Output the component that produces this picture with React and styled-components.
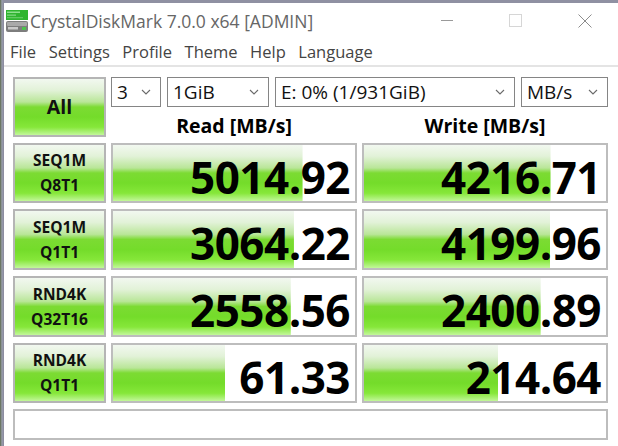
import React from 'react';
import styled, { createGlobalStyle } from 'styled-components';

const GlobalStyle = createGlobalStyle`
  html, body {
    margin: 0;
    padding: 0;
  }
  body {
    background: #2f3529;
    font-family: "Open Sans", "Noto Sans", sans-serif;
  }
`;

const Desktop = styled.div`
  width: 618px;
  height: 446px;
  overflow: hidden;
  background: linear-gradient(90deg, #5d6a4c 0px, #9a9fae 2px, #8f90a2 3px);
  padding-top: 3px;
  box-sizing: border-box;
`;

const Window = styled.div`
  margin-left: 3px;
  width: 615px;
  height: 443px;
  background: #fff;
  border-left: 1px solid #8d8da0;
  display: flex;
  flex-direction: column;
`;

const TitleBar = styled.div`
  height: 35px;
  display: flex;
  align-items: center;
  color: #666;
  font-size: 17.5px;
`;

const AppIcon = styled.svg`
  width: 24px;
  height: 24px;
  margin: 0 1px 0 1px;
  flex-shrink: 0;
`;

const Title = styled.div`
  flex: 1;
  white-space: nowrap;
`;

const CaptionButton = styled.div`
  width: 69px;
  height: 35px;
  display: flex;
  align-items: center;
  justify-content: center;
`;

const MenuBar = styled.div`
  height: 27px;
  display: flex;
  align-items: center;
  gap: 12.5px;
  padding-left: 6px;
  font-size: 16.5px;
  color: #444;
  border-bottom: 2px solid #e4e4e4;
`;

const MenuItem = styled.span`
  white-space: nowrap;
`;

const Body = styled.div`
  padding: 10px 0 0 9px;
  display: flex;
  flex-direction: column;
  gap: 6px;
`;

const TopArea = styled.div`
  display: flex;
  gap: 5px;
`;

const Controls = styled.div`
  display: flex;
  flex-direction: column;
  width: 497px;
`;

const ComboRow = styled.div`
  display: flex;
  gap: 6px;
  height: 30px;
`;

const Combo = styled.div`
  width: ${p => p.$w}px;
  box-sizing: border-box;
  border: 1px solid #858585;
  background: #fff;
  display: flex;
  align-items: center;
  justify-content: space-between;
  padding: 0 9px 0 5px;
  font-size: 19px;
  color: #111;
  white-space: nowrap;
`;

const HeaderRow = styled.div`
  display: flex;
  gap: 5px;
  height: 30px;
`;

const ColumnHeader = styled.div`
  width: 246px;
  display: flex;
  align-items: flex-end;
  justify-content: center;
  font-weight: 700;
  font-size: 19.5px;
  line-height: 1;
  padding-bottom: 2px;
  box-sizing: border-box;
  color: #000;
`;

const greenFill = `linear-gradient(to bottom,
  #f2f8f0 0%,
  #e2f2d8 20%,
  #b9e698 41%,
  #7cdb33 50%,
  #74dc2a 68%,
  #86e73a 86%,
  #c2f79a 100%)`;

const LabelButton = styled.div`
  width: 93px;
  height: ${p => p.$h}px;
  box-sizing: border-box;
  border: 2px solid #b5b5b5;
  background: ${greenFill};
  display: flex;
  flex-direction: column;
  align-items: center;
  justify-content: center;
  font-weight: 700;
  color: #111;
  font-size: ${p => (p.$big ? 19.5 : 15.5)}px;
  line-height: ${p => (p.$big ? 1 : '25px')};
`;

const ResultRow = styled.div`
  display: flex;
  gap: 5px;
  height: ${p => p.$h}px;
`;

const Meter = styled.div`
  width: 246px;
  box-sizing: border-box;
  border: 2px solid #bdbdbd;
  background-color: #fff;
  background-image: ${greenFill};
  background-repeat: no-repeat;
  display: flex;
  align-items: center;
  justify-content: flex-end;
  padding: 7px 5px 0 0;
  font-weight: 700;
  font-size: 44px;
  line-height: 1;
  color: #000;
  letter-spacing: -0.5px;
`;

const StatusBar = styled.div`
  width: 595px;
  height: 31px;
  box-sizing: border-box;
  border: 2px solid #bdbdbd;
  background: #fff;
`;

const Chevron = () => (
  <svg width="10" height="6" viewBox="0 0 10 6">
    <path d="M1 1 L5 5 L9 1" fill="none" stroke="#6a6a6a" strokeWidth="1.1" />
  </svg>
);

const DiskIcon = () => (
  <AppIcon viewBox="0 0 24 24">
    <rect x="1" y="1" width="22" height="10" fill="#2fb52f" />
    <rect x="2" y="2.5" width="13" height="1.5" fill="#8fe08f" />
    <rect x="2" y="5.5" width="9" height="1.3" fill="#7fd67f" />
    <rect x="2" y="8" width="16" height="1.3" fill="#62c962" />
    <rect x="1" y="12" width="22" height="11" rx="2" fill="#7d7d7d" />
    <rect x="2" y="13" width="20" height="4" rx="1" fill="#a9a9a9" />
    <rect x="3" y="18" width="10" height="2.5" fill="#c9c9c9" />
    <rect x="17" y="18" width="4" height="3" fill="#4cc24c" />
  </AppIcon>
);

const results = [
  { label: ['SEQ1M', 'Q8T1'], read: 5014.92, write: 4216.71, h: 60 },
  { label: ['SEQ1M', 'Q1T1'], read: 3064.22, write: 4199.96, h: 61 },
  { label: ['RND4K', 'Q32T16'], read: 2558.56, write: 2400.89, h: 61 },
  { label: ['RND4K', 'Q1T1'], read: 61.33, write: 214.64, h: 60 },
];

// same log scale the meter uses: 0.1 .. 100000 MB/s
const meterWidth = v => {
  const pct = (Math.log10(v * 10) / 6) * 100;
  return `${Math.max(0, Math.min(100, pct))}% 100%`;
};

const fmt = v => v.toFixed(2);

export default function App() {
  return (
    <>
      <GlobalStyle />
      <Desktop>
        <Window>
          <TitleBar>
            <DiskIcon />
            <Title>CrystalDiskMark 7.0.0 x64 [ADMIN]</Title>
            <CaptionButton>
              <svg width="12" height="2" viewBox="0 0 12 2">
                <rect width="12" height="1" fill="#9a9a9a" />
              </svg>
            </CaptionButton>
            <CaptionButton>
              <svg width="13" height="13" viewBox="0 0 13 13">
                <rect x="0.5" y="0.5" width="12" height="12" fill="none" stroke="#d6d6d6" />
              </svg>
            </CaptionButton>
            <CaptionButton>
              <svg width="14" height="14" viewBox="0 0 14 14">
                <path d="M0.5 0.5 L13.5 13.5 M13.5 0.5 L0.5 13.5" stroke="#8c8c8c" strokeWidth="1" />
              </svg>
            </CaptionButton>
          </TitleBar>

          <MenuBar>
            <MenuItem>File</MenuItem>
            <MenuItem>Settings</MenuItem>
            <MenuItem>Profile</MenuItem>
            <MenuItem>Theme</MenuItem>
            <MenuItem>Help</MenuItem>
            <MenuItem>Language</MenuItem>
          </MenuBar>

          <Body>
            <TopArea>
              <LabelButton $big $h={60}>All</LabelButton>
              <Controls>
                <ComboRow>
                  <Combo $w={50}>3<Chevron /></Combo>
                  <Combo $w={102}>1GiB<Chevron /></Combo>
                  <Combo $w={240}>E: 0% (1/931GiB)<Chevron /></Combo>
                  <Combo $w={87}>MB/s<Chevron /></Combo>
                </ComboRow>
                <HeaderRow>
                  <ColumnHeader>Read [MB/s]</ColumnHeader>
                  <ColumnHeader>Write [MB/s]</ColumnHeader>
                </HeaderRow>
              </Controls>
            </TopArea>

            {results.map(r => (
              <ResultRow key={r.label.join()} $h={r.h}>
                <LabelButton $h={r.h}>
                  <span>{r.label[0]}</span>
                  <span>{r.label[1]}</span>
                </LabelButton>
                <Meter style={{ backgroundSize: meterWidth(r.read) }}>{fmt(r.read)}</Meter>
                <Meter style={{ backgroundSize: meterWidth(r.write) }}>{fmt(r.write)}</Meter>
              </ResultRow>
            ))}

            <StatusBar />
          </Body>
        </Window>
      </Desktop>
    </>
  );
}
